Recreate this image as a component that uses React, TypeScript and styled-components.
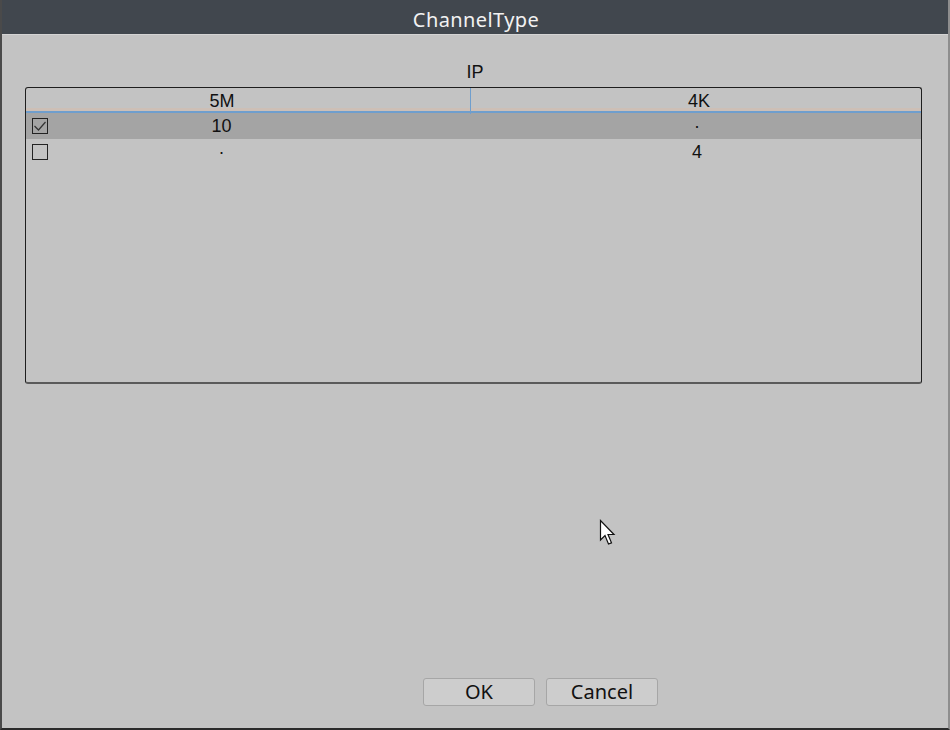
import React, { useState } from 'react';
import styled, { createGlobalStyle } from 'styled-components';

const GlobalStyle = createGlobalStyle`
  html, body {
    margin: 0;
    padding: 0;
    background: #c3c3c3;
  }
`;

interface Row {
  checked: boolean;
  m5: string;
  k4: string;
}

const ROWS: Row[] = [
  { checked: true, m5: '10', k4: '·' },
  { checked: false, m5: '·', k4: '4' }
];

const Window = styled.div`
  width: 950px;
  height: 730px;
  box-sizing: border-box;
  display: flex;
  flex-direction: column;
  background: #c3c3c3;
  border-left: 2px solid #4a4a4a;
  border-right: 2px solid #8e8e8e;
  border-bottom: 2px solid #2a2a2a;
  position: relative;
  overflow: hidden;
`;

const TitleBar = styled.div`
  height: 35px;
  flex-shrink: 0;
  margin-left: -2px;
  margin-right: -2px;
  background: #41474e;
  border-bottom: 1px solid #d4d4d4;
  display: flex;
  align-items: center;
  justify-content: center;
  color: #f2f2f2;
  font-family: 'Noto Sans', 'Open Sans', sans-serif;
  font-size: 20px;
  letter-spacing: 0.4px;
  padding-top: 5px;
  padding-left: 2px;
  box-sizing: border-box;
`;

const Body = styled.div`
  flex: 1;
  display: flex;
  flex-direction: column;
  padding: 22px 26px 0 23px;
`;

const GroupLabel = styled.div`
  text-align: center;
  font-family: 'Liberation Sans', Arial, sans-serif;
  font-size: 18px;
  color: #111;
  height: 30px;
  line-height: 31px;
  padding-left: 3px;
`;

const Table = styled.div`
  height: 297px;
  box-sizing: border-box;
  border: 1px solid #1e1e1e;
  border-bottom: 2px solid #5a5a5a;
  border-radius: 3px;
  font-family: 'Liberation Sans', Arial, sans-serif;
  font-size: 18px;
  color: #111;
`;

const Columns = styled.div`
  display: grid;
  grid-template-columns: 445px 1fr;
`;

const HeaderRow = styled(Columns)`
  height: 23px;
  border-bottom: 2px solid #6f9ecd;
  box-shadow: inset 0 -3px 0 #cdbfb6;
`;

const HeaderCell = styled.div<{ $first?: boolean }>`
  text-align: center;
  line-height: 26px;
  border-right: ${p => (p.$first ? '1px solid #6f9ecd' : 'none')};
  padding-right: ${p => (p.$first ? '52px' : '0')};
  padding-left: ${p => (p.$first ? '0' : '6px')};
`;

const DataRow = styled(Columns)<{ $selected: boolean }>`
  height: 26px;
  align-items: center;
  background: ${p => (p.$selected ? '#a4a4a4' : 'transparent')};
`;

const FirstCell = styled.div`
  display: flex;
  align-items: center;
  padding-left: 6px;
`;

const CellText = styled.span<{ $first?: boolean }>`
  flex: 1;
  text-align: center;
  padding-right: ${p => (p.$first ? '76px' : '0')};
  padding-left: ${p => (p.$first ? '0' : '2px')};
`;

const Check = styled.span`
  width: 16px;
  height: 16px;
  box-sizing: border-box;
  border: 1px solid #222;
  display: inline-flex;
  align-items: center;
  justify-content: center;
`;

const Footer = styled.div`
  margin-top: auto;
  display: flex;
  justify-content: center;
  gap: 11px;
  padding: 0 0 22px 134px;
`;

const Button = styled.button`
  width: 112px;
  height: 28px;
  box-sizing: border-box;
  border: 1px solid #a6a6a6;
  border-radius: 3px;
  background: #cdcdcd;
  font-family: 'Noto Sans', 'Open Sans', sans-serif;
  font-size: 20px;
  color: #111;
  padding: 0;
  line-height: 26px;
`;

const Pointer = styled.svg`
  position: absolute;
  left: 597px;
  top: 519px;
`;

function CheckBox({ checked }: { checked: boolean }) {
  return (
    <Check>
      {checked && (
        <svg width="14" height="14" viewBox="0 0 14 14">
          <path d="M1.5 7 L5.5 11 L12.5 3" fill="none" stroke="#333" strokeWidth="1.2" />
        </svg>
      )}
    </Check>
  );
}

export default function App() {
  const [rows, setRows] = useState(ROWS);

  const toggle = (i: number) => {
    setRows(rows.map((r, j) => (j === i ? { ...r, checked: !r.checked } : r)));
  };

  return (
    <Window>
      <GlobalStyle />
      <TitleBar>ChannelType</TitleBar>
      <Body>
        <GroupLabel>IP</GroupLabel>
        <Table>
          <HeaderRow>
            <HeaderCell $first>5M</HeaderCell>
            <HeaderCell>4K</HeaderCell>
          </HeaderRow>
          {rows.map((r, i) => (
            <DataRow key={i} $selected={i === 0} onClick={() => toggle(i)}>
              <FirstCell>
                <CheckBox checked={r.checked} />
                <CellText $first>{r.m5}</CellText>
              </FirstCell>
              <CellText>{r.k4}</CellText>
            </DataRow>
          ))}
        </Table>
        <Footer>
          <Button>OK</Button>
          <Button>Cancel</Button>
        </Footer>
      </Body>
      <Pointer width="18" height="28" viewBox="0 0 18 28">
        <path
          d="M1.5 1.5 L1.5 21 L6 16.5 L9.5 25 L12.5 23.8 L9 15.5 L15 15.5 Z"
          fill="#fff"
          stroke="#111"
          strokeWidth="1.2"
          strokeLinejoin="miter"
        />
      </Pointer>
    </Window>
  );
}
